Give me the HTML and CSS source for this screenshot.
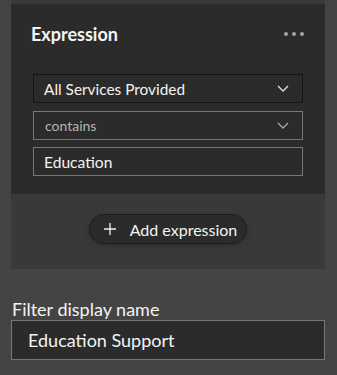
FILE: index.html
```html
<!DOCTYPE html>
<html>
  <head>
    <title>Filter</title>
    <meta charset="UTF-8" />
    <link rel="stylesheet" href="styles.css">
  </head>
  <body>
    <div class="panel">
      <div class="card">
        <div class="card-head">
          <h2 class="title">Expression</h2>
          <span class="dots"><i></i><i></i><i></i></span>
        </div>
        <div class="fields">
          <div class="select field-main">
            <span>All Services Provided</span>
            <svg class="chev" width="12" height="7" viewBox="0 0 12 7"><path d="M1 1l5 5 5-5" fill="none" stroke="#e0e0e0" stroke-width="1.3"/></svg>
          </div>
          <div class="select field-op">
            <span>contains</span>
            <svg class="chev" width="12" height="7" viewBox="0 0 12 7"><path d="M1 1l5 5 5-5" fill="none" stroke="#a8a8a8" stroke-width="1.3"/></svg>
          </div>
          <div class="input field-val">Education</div>
        </div>
      </div>
      <div class="actions">
        <button class="add-btn">
          <svg width="12" height="12" viewBox="0 0 12 12"><path d="M6 0v12M0 6h12" stroke="#f0f0f0" stroke-width="1.3"/></svg>
          <span>Add expression</span>
        </button>
      </div>
    </div>
    <div class="name-field">
      <label class="label">Filter display name</label>
      <div class="input name-input">Education Support</div>
    </div>
  </body>
</html>
```
FILE: styles.css
```css
* {
  box-sizing: border-box;
  margin: 0;
  padding: 0;
}

body {
  background: #444444;
  font-family: Lato, "Noto Sans", sans-serif;
  color: #f3f3f3;
  padding: 0 12px 0 11px;
  height: 375px;
  overflow: hidden;
}

.panel {
  background: #393939;
  padding-top: 4px;
  height: 269px;
}

.card {
  background: #2b2b2b;
  height: 190px;
  padding: 0 22px;
}

.card-head {
  display: flex;
  align-items: center;
  justify-content: space-between;
  height: 60px;
}

.title {
  font-size: 18px;
  font-weight: 700;
  color: #f4f4f4;
  margin-left: -2px;
}

.dots {
  display: flex;
  gap: 4px;
  margin-right: -1px;
}

.dots i {
  width: 4px;
  height: 4px;
  border-radius: 50%;
  background: #a4a4a4;
}

.fields {
  display: flex;
  flex-direction: column;
  gap: 7px;
  padding-top: 10px;
}

.select,
.input {
  display: flex;
  align-items: center;
  justify-content: space-between;
  height: 29px;
  padding: 0 13px 0 10px;
  font-size: 15.4px;
  background: #2b2b2b;
  border: 1px solid #767676;
}

.field-main {
  border-color: #141414;
}

.field-op {
  color: #b4b4b4;
  font-size: 14px;
  padding-left: 11px;
  margin-top: 1px;
}

.field-val {
  font-size: 15.6px;
}

.actions {
  display: flex;
  justify-content: center;
  padding-top: 20px;
}

.add-btn {
  display: flex;
  align-items: center;
  gap: 14px;
  height: 30px;
  padding: 0 9px 0 14px;
  background: #2b2b2b;
  border: 1px solid #1c1c1c;
  border-radius: 15px;
  box-shadow: 0 2px 5px rgba(0, 0, 0, 0.2);
  font-family: inherit;
  font-size: 16px;
  color: #f3f3f3;
}

.name-field {
  padding-top: 29px;
}

.label {
  display: block;
  font-size: 18px;
  color: #f3f3f3;
  margin-left: 1px;
  line-height: 22px;
}

.name-input {
  height: 40px;
  padding-left: 16px;
  font-size: 18px;
}
```
